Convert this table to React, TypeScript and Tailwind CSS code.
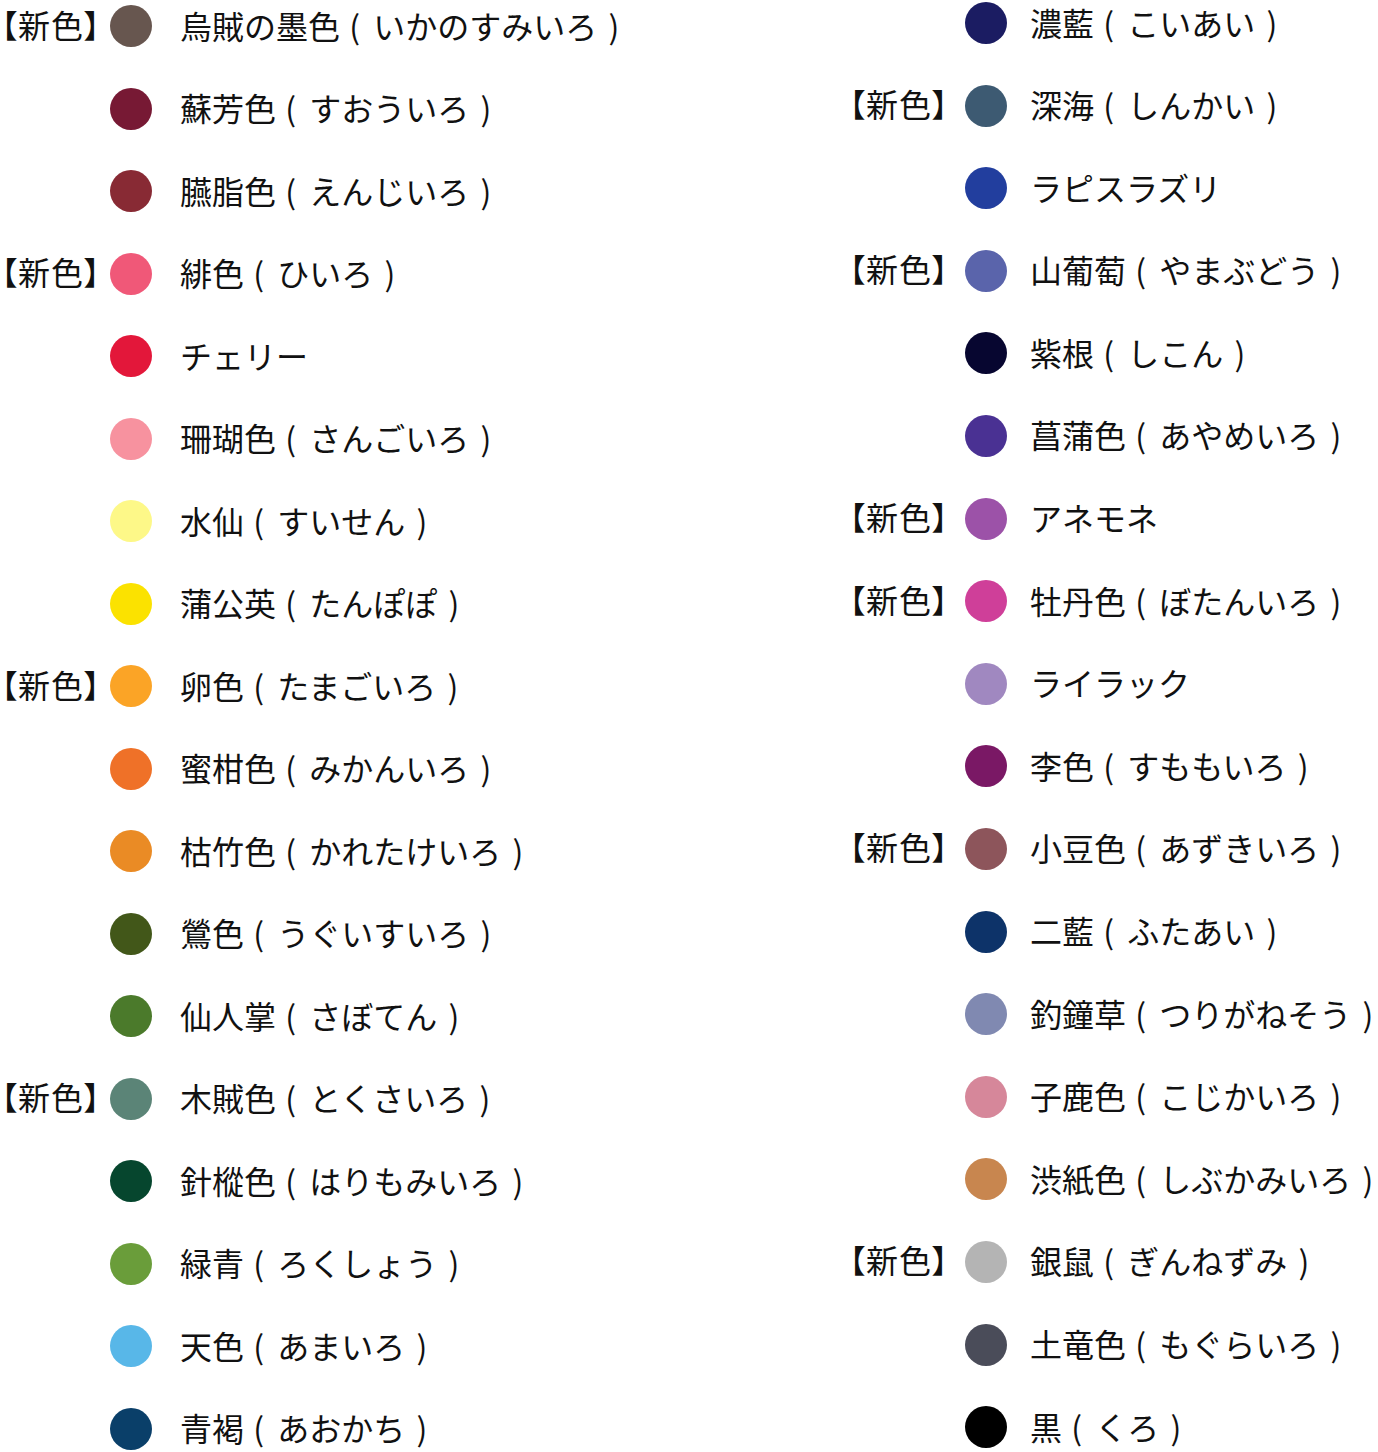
type Swatch = {
  name: string;
  reading?: string;
  color: string;
  isNew?: boolean;
};

const leftColors: Swatch[] = [
  { name: "烏賊の墨色", reading: "いかのすみいろ", color: "#67564f", isNew: true },
  { name: "蘇芳色", reading: "すおういろ", color: "#771934" },
  { name: "臙脂色", reading: "えんじいろ", color: "#882a34" },
  { name: "緋色", reading: "ひいろ", color: "#f05878", isNew: true },
  { name: "チェリー", color: "#e3173a" },
  { name: "珊瑚色", reading: "さんごいろ", color: "#f7929f" },
  { name: "水仙", reading: "すいせん", color: "#fdf888" },
  { name: "蒲公英", reading: "たんぽぽ", color: "#fbe200" },
  { name: "卵色", reading: "たまごいろ", color: "#fba426", isNew: true },
  { name: "蜜柑色", reading: "みかんいろ", color: "#ef7128" },
  { name: "枯竹色", reading: "かれたけいろ", color: "#ea8b25" },
  { name: "鶯色", reading: "うぐいすいろ", color: "#425719" },
  { name: "仙人掌", reading: "さぼてん", color: "#4b7a2b" },
  { name: "木賊色", reading: "とくさいろ", color: "#5b8477", isNew: true },
  { name: "針樅色", reading: "はりもみいろ", color: "#06462e" },
  { name: "緑青", reading: "ろくしょう", color: "#6a9d3a" },
  { name: "天色", reading: "あまいろ", color: "#58b7e8" },
  { name: "青褐", reading: "あおかち", color: "#0a3f69" },
];

const rightColors: Swatch[] = [
  { name: "濃藍", reading: "こいあい", color: "#1b1c62" },
  { name: "深海", reading: "しんかい", color: "#3d5a72", isNew: true },
  { name: "ラピスラズリ", color: "#223e9e" },
  { name: "山葡萄", reading: "やまぶどう", color: "#5a64ab", isNew: true },
  { name: "紫根", reading: "しこん", color: "#070630" },
  { name: "菖蒲色", reading: "あやめいろ", color: "#4a3193" },
  { name: "アネモネ", color: "#9c52a8", isNew: true },
  { name: "牡丹色", reading: "ぼたんいろ", color: "#cf3f99", isNew: true },
  { name: "ライラック", color: "#a088c0" },
  { name: "李色", reading: "すももいろ", color: "#7a1865" },
  { name: "小豆色", reading: "あずきいろ", color: "#8d555b", isNew: true },
  { name: "二藍", reading: "ふたあい", color: "#0d3369" },
  { name: "釣鐘草", reading: "つりがねそう", color: "#8089b1" },
  { name: "子鹿色", reading: "こじかいろ", color: "#d6879a" },
  { name: "渋紙色", reading: "しぶかみいろ", color: "#c8864f" },
  { name: "銀鼠", reading: "ぎんねずみ", color: "#b4b4b4", isNew: true },
  { name: "土竜色", reading: "もぐらいろ", color: "#4a4c59" },
  { name: "黒", reading: "くろ", color: "#000000" },
];

const font = "font-['Noto_Sans_CJK_JP','Noto_Sans',sans-serif]";

const ColorRow = ({ swatch, side }: { swatch: Swatch; side: "left" | "right" }) => (
  <div className="flex h-[42px] items-center">
    <div
      className={
        side === "left"
          ? "mb-[2px] w-[110px] shrink-0 pl-[1px]"
          : "mb-[2px] w-[120px] shrink-0 pl-[4px]"
      }
    >
      {swatch.isNew && (
        <span className="text-[32px] leading-none tracking-[1px] text-[#111] [font-feature-settings:'palt']">
          【新色】
        </span>
      )}
    </div>
    <div
      className="h-[42px] w-[42px] shrink-0 rounded-full"
      style={{ backgroundColor: swatch.color }}
    />
    <span
      className={
        side === "left"
          ? "mb-[3px] ml-[28px] whitespace-nowrap text-[32px] leading-none text-[#111]"
          : "mb-[3px] ml-[23px] whitespace-nowrap text-[32px] leading-none text-[#111]"
      }
    >
      {swatch.name}
      {swatch.reading && (
        <>
          {" "}
          <span className="ml-[2px] mr-[6px]">(</span> {swatch.reading}{" "}
          <span className="ml-[4px]">)</span>
        </>
      )}
    </span>
  </div>
);

export default function App() {
  return (
    <div className={`flex h-[1452px] w-[1378px] overflow-hidden bg-white ${font}`}>
      <div className="flex w-[845px] shrink-0 flex-col gap-[40.5px] pt-[5px]">
        {leftColors.map((c) => (
          <ColorRow key={c.name} swatch={c} side="left" />
        ))}
      </div>
      <div className="flex flex-1 flex-col gap-[40.6px] pt-[2px]">
        {rightColors.map((c) => (
          <ColorRow key={c.name} swatch={c} side="right" />
        ))}
      </div>
    </div>
  );
}
